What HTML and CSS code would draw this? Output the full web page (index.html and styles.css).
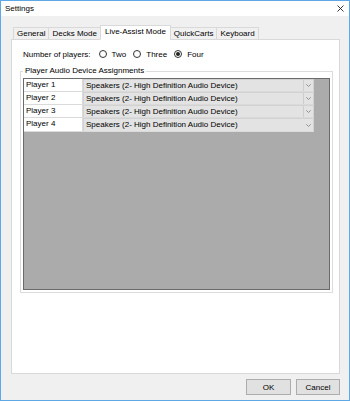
FILE: index.html
```html
<!DOCTYPE html>
<html lang="en">
<head>
    <meta charset="UTF-8">
    <title>Settings</title>
    <link rel="stylesheet" href="styles.css">
</head>
<body>
    <div class="window">
        <div class="titlebar">
            <span class="title">Settings</span>
            <svg class="close" width="7" height="7" viewBox="0 0 7 7">
                <path d="M0.5 0.5L6.5 6.5M6.5 0.5L0.5 6.5" stroke="#222" stroke-width="0.9" fill="none"/>
            </svg>
        </div>
        <div class="client">
            <div class="tabs">
                <div class="tab">General</div>
                <div class="tab">Decks Mode</div>
                <div class="tab selected">Live-Assist Mode</div>
                <div class="tab">QuickCarts</div>
                <div class="tab">Keyboard</div>
            </div>
            <div class="panel">
                <div class="players-row">
                    <span>Number of players:</span>
                    <label class="radio"><span class="circle"></span>Two</label>
                    <label class="radio"><span class="circle"></span>Three</label>
                    <label class="radio"><span class="circle checked"></span>Four</label>
                </div>
                <fieldset class="group">
                    <legend>Player Audio Device Assignments</legend>
                    <div class="grid">
                        <!-- one row per player -->
                        <div class="grid-row">
                            <div class="name">Player 1</div>
                            <div class="combo">
                                <span class="combo-text">Speakers (2- High Definition Audio Device)</span>
                                <span class="combo-arrow"><svg width="5" height="3" viewBox="0 0 5 3"><path d="M0.3 0.3L2.5 2.5L4.7 0.3" stroke="#8a8a8a" stroke-width="0.9" fill="none"/></svg></span>
                            </div>
                        </div>
                        <div class="grid-row">
                            <div class="name">Player 2</div>
                            <div class="combo">
                                <span class="combo-text">Speakers (2- High Definition Audio Device)</span>
                                <span class="combo-arrow"><svg width="5" height="3" viewBox="0 0 5 3"><path d="M0.3 0.3L2.5 2.5L4.7 0.3" stroke="#8a8a8a" stroke-width="0.9" fill="none"/></svg></span>
                            </div>
                        </div>
                        <div class="grid-row">
                            <div class="name">Player 3</div>
                            <div class="combo">
                                <span class="combo-text">Speakers (2- High Definition Audio Device)</span>
                                <span class="combo-arrow"><svg width="5" height="3" viewBox="0 0 5 3"><path d="M0.3 0.3L2.5 2.5L4.7 0.3" stroke="#8a8a8a" stroke-width="0.9" fill="none"/></svg></span>
                            </div>
                        </div>
                        <div class="grid-row last">
                            <div class="name">Player 4</div>
                            <div class="combo plain">
                                <span class="combo-text">Speakers (2- High Definition Audio Device)</span>
                                <span class="combo-arrow"><svg width="5" height="3" viewBox="0 0 5 3"><path d="M0.3 0.3L2.5 2.5L4.7 0.3" stroke="#8a8a8a" stroke-width="0.9" fill="none"/></svg></span>
                            </div>
                        </div>
                    </div>
                </fieldset>
            </div>
            <div class="buttons">
                <button class="btn ok">OK</button>
                <button class="btn cancel">Cancel</button>
            </div>
        </div>
    </div>
</body>
</html>
```

FILE: styles.css
```css
body {
    margin: 0;
    font-family: "Liberation Sans", Arial, sans-serif;
    font-size: 8px;
    color: #000;
}
.window {
    width: 350px;
    height: 401px;
    box-sizing: border-box;
    border: 1px solid #5ea8e6;
    display: flex;
    flex-direction: column;
    background: #f0f0f0;
}
.titlebar {
    height: 15px;
    flex: none;
    background: #fff;
    display: flex;
    align-items: center;
    justify-content: space-between;
    padding: 0 5px 0 4px;
}
.client {
    flex: 1;
    display: flex;
    flex-direction: column;
    padding: 9px 9px 5px 10px;
    min-height: 0;
}

/* tabs */
.tabs {
    display: flex;
    align-items: flex-end;
    height: 15px;
    margin-left: 2px;
    margin-bottom: -1px;
    position: relative;
    z-index: 1;
}
.tab {
    height: 11px;
    line-height: 11px;
    padding: 0 3px;
    border: 1px solid #d9d9d9;
    background: #f0f0f0;
    margin-left: -1px;
    white-space: nowrap;
}
.tab:first-child {
    margin-left: 0;
}
.tab.selected {
    height: 13px;
    line-height: 12px;
    padding: 0 4px;
    background: #fff;
    border-bottom-color: #fff;
}

.panel {
    flex: 1;
    background: #fff;
    border: 1px solid #d9d9d9;
    padding: 8px 6px 0 8px;
}
.players-row {
    display: flex;
    align-items: center;
    height: 12px;
    padding-left: 3px;
}
.radio {
    display: flex;
    align-items: center;
    margin-left: 8px;
}
.radio + .radio {
    margin-left: 7px;
}
.circle {
    width: 6px;
    height: 6px;
    border: 1px solid #333;
    border-radius: 50%;
    margin-right: 5px;
    display: flex;
    align-items: center;
    justify-content: center;
}
.circle.checked::after {
    content: "";
    width: 4px;
    height: 4px;
    border-radius: 50%;
    background: #222;
}

/* group box */
.group {
    margin: 6px 0 0 0;
    padding: 2px;
    border: 1px solid #dcdcdc;
}
.group legend {
    padding: 0 2px;
    line-height: 10px;
}
.grid {
    height: 210px;
    border: 1px solid #6b6b6b;
    background: #ababab;
}
.grid-row {
    display: flex;
    height: 12px;
    border-bottom: 1px solid #dadada;
    width: 290px;
}
.grid-row.last {
    height: 13px;
}
.name {
    width: 56px;
    padding-left: 2px;
    background: #fff;
    border-right: 1px solid #dadada;
    line-height: 12px;
}
.combo {
    width: 231px;
    box-sizing: border-box;
    display: flex;
    background: #e3e3e3;
    border: 1px solid #d2d2d2;
    border-bottom: none;
}
.combo-text {
    flex: 1;
    padding-left: 2px;
    line-height: 11px;
}
.combo-arrow {
    width: 9px;
    display: flex;
    align-items: center;
    justify-content: center;
    border-left: 1px solid #cdcdcd;
}
.combo.plain .combo-arrow {
    border-left: none;
}

/* dialog buttons */
.buttons {
    display: flex;
    justify-content: flex-end;
    gap: 5px;
    margin-top: 5px;
    flex: none;
}
.btn {
    height: 16px;
    padding: 0;
    font-family: "Liberation Sans", Arial, sans-serif;
    font-size: 8px;
    color: #000;
    background: #e1e1e1;
    border: 1px solid #adadad;
}
.btn.ok {
    width: 45px;
}
.btn.cancel {
    width: 44px;
}
```
